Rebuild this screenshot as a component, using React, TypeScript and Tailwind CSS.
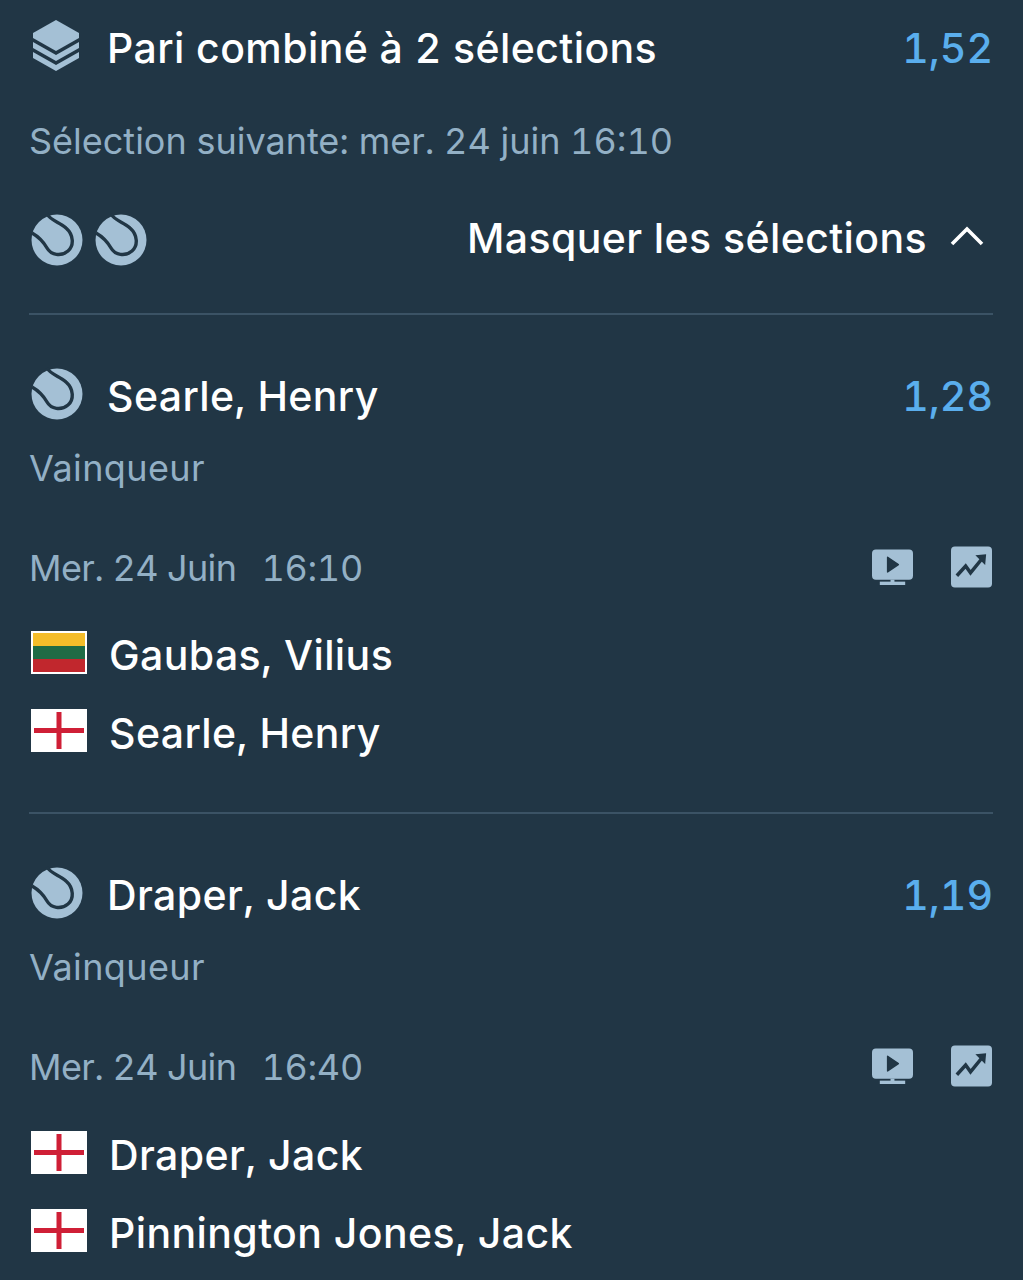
const F = "font-['Inter','Liberation_Sans',sans-serif] tabular-nums";
const MAIN = "text-[41px] font-medium tracking-[0.4px] text-white leading-none";
const ODDS = "text-[41px] font-medium text-[#5aaeed] leading-none";
const SUB = "text-[36px] text-[#93b0c5] leading-none";

function Ball() {
  return (
    <svg width="54" height="54" viewBox="0 0 54 54" className="shrink-0">
      <circle cx="27" cy="27" r="25.5" fill="#a4c0d5" />
      <path d="M17 1 C21 8 30 9 36 15 C44 22 44 33 38 38 C31 44 21 42 17 35 C13 28 9 24 2 20" fill="none" stroke="#213645" strokeWidth="3.4" />
    </svg>
  );
}

function Stack() {
  return (
    <svg width="50" height="52" viewBox="0 0 50 52" className="shrink-0 mb-[4px]">
      <path d="M25 0 L48 13 V18 L25 31 L2 18 V13 Z" fill="#a4c0d5" />
      <path d="M2 22 L25 35 L48 22 V28 L25 41 L2 28 Z" fill="#a4c0d5" />
      <path d="M2 32 L25 45 L48 32 V38 L25 51 L2 38 Z" fill="#a4c0d5" />
    </svg>
  );
}

function Tv() {
  return (
    <svg width="41" height="36" viewBox="0 0 42 36" className="shrink-0">
      <rect x="0" y="0" width="42" height="31" rx="4" fill="#a4c0d5" />
      <path d="M16 8 L27 15.5 L16 23 Z" fill="#213645" strokeLinejoin="round" stroke="#213645" strokeWidth="1.5" />
      <rect x="19" y="31" width="4" height="3" fill="#a4c0d5" />
      <rect x="8" y="33" width="26" height="3.5" fill="#a4c0d5" />
    </svg>
  );
}

function Chart() {
  return (
    <svg width="41" height="42" viewBox="0 0 42 42" className="shrink-0">
      <rect width="42" height="42" rx="4" fill="#a4c0d5" />
      <path d="M6 30 L15 20 L20 27 L33 11" fill="none" stroke="#213645" strokeWidth="3.6" />
      <path d="M25 9 L36 8 L35 19 Z" fill="#213645" />
    </svg>
  );
}

function Chevron() {
  return (
    <svg width="36" height="22" viewBox="0 0 36 22" className="shrink-0 mb-[4px]">
      <path d="M3 19 L18 4 L33 19" fill="none" stroke="#ffffff" strokeWidth="3.6" />
    </svg>
  );
}

function Lithuania() {
  return (
    <div className="w-[56px] h-[43px] mb-[6px] border-2 border-white flex flex-col shrink-0">
      <div className="flex-1 bg-[#f4bd2a]" />
      <div className="flex-1 bg-[#1f6b45]" />
      <div className="flex-1 bg-[#c1272d]" />
    </div>
  );
}

function England() {
  return (
    <svg width="56" height="43" viewBox="0 0 56 43" className="shrink-0 mb-[6px]">
      <rect width="56" height="43" fill="#ffffff" />
      <rect x="25.5" y="3" width="5" height="37" fill="#cf1f36" />
      <rect x="3" y="19" width="50" height="5" fill="#cf1f36" />
    </svg>
  );
}

function Team({ flag, name }: { flag: React.ReactNode; name: string }) {
  return (
    <div className="h-[52px] flex items-center gap-[22px] pl-[2px]">
      {flag}
      <span className={MAIN}>{name}</span>
    </div>
  );
}

function Selection({ name, odds, date, time, teams, tall }: { name: string; odds: string; date: string; time: string; teams: { flag: React.ReactNode; name: string }[]; tall?: boolean }) {
  return (
    <section className="pt-[48px] pb-[53px] border-b-2 border-[#3b5365] last:border-b-0">
      <div className="h-[66px] flex items-center justify-between">
        <div className="flex items-center gap-[23px] pl-[1px]">
          <div className="mb-[5px]"><Ball /></div>
          <span className={MAIN}>{name}</span>
        </div>
        <span className={ODDS}>{odds}</span>
      </div>
      <div className={`h-[78px] flex items-center tracking-[0.4px] ${SUB}`}>Vainqueur</div>
      <div className={`${tall ? "h-[123px] pb-[1px]" : "h-[122px]"} flex items-center justify-between`}>
        <div className={`flex gap-[25px] ${SUB}`}>
          <span className="tracking-[-0.6px]">{date}</span>
          <span className="tracking-[-0.3px]">{time}</span>
        </div>
        <div className="flex items-center gap-[38px] pr-[1px] mb-[3px]">
          <Tv />
          <Chart />
        </div>
      </div>
      <div className="flex flex-col gap-[26px]">
        {teams.map((t) => (
          <Team key={t.name} flag={t.flag} name={t.name} />
        ))}
      </div>
    </section>
  );
}

export default function App() {
  return (
    <div className={`${F} w-[1023px] h-[1280px] overflow-hidden bg-[#213645] pl-[29px] pr-[30px]`}>
      <header className="h-[96px] flex items-center justify-between">
        <div className="flex items-center gap-[26px] pl-[2px]">
          <Stack />
          <span className={MAIN}>Pari combiné à 2 sélections</span>
        </div>
        <span className={ODDS}>1,52</span>
      </header>
      <div className={`h-[90px] flex items-center ${SUB}`}>Sélection suivante: mer. 24 juin 16:10</div>
      <div className="h-[104px] flex items-center justify-between">
        <div className="flex gap-[10px] pl-[1px] mt-[4px]">
          <Ball />
          <Ball />
        </div>
        <div className="flex items-center gap-[22px] pr-[8px]">
          <span className={MAIN}>Masquer les sélections</span>
          <Chevron />
        </div>
      </div>
      <div className="mt-[23px] border-b-2 border-[#3b5365]" />
      <Selection
        name="Searle, Henry"
        odds="1,28"
        date="Mer. 24 Juin"
        time="16:10"
        teams={[
          { flag: <Lithuania />, name: "Gaubas, Vilius" },
          { flag: <England />, name: "Searle, Henry" },
        ]}
      />
      <Selection
        tall
        name="Draper, Jack"
        odds="1,19"
        date="Mer. 24 Juin"
        time="16:40"
        teams={[
          { flag: <England />, name: "Draper, Jack" },
          { flag: <England />, name: "Pinnington Jones, Jack" },
        ]}
      />
    </div>
  );
}
